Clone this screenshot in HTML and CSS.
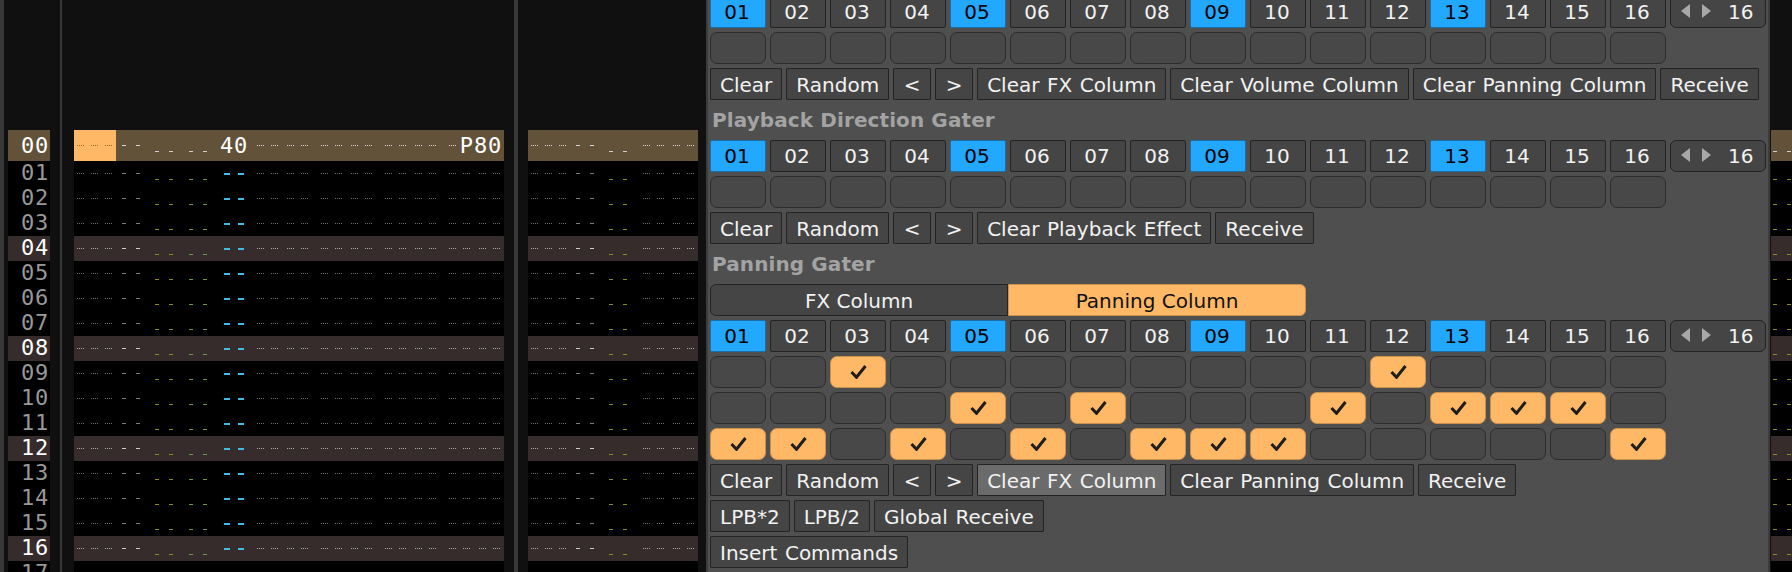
FILE: index.html
```html
<!DOCTYPE html>
<html lang="en">
<head>
<meta charset="utf-8">
<title>Gater</title>
<link rel="stylesheet" href="styles.css">
</head>
<body>
<svg class="defs" width="0" height="0" aria-hidden="true">
  <defs>
    <g id="t1-left">
      <path class="dots" d="M3 12.5h8M17 12.5h8M31 12.5h8"/>
    </g>
    <g id="t1-mid">
      <path class="dash" d="M48 12.5h4M62 12.5h4"/>
      <path class="low1" d="M81 18.5h4M95 18.5h4"/>
      <path class="low2" d="M115 18.5h4M129 18.5h4"/>
      <path class="dots" d="M183 12.5h8M197 12.5h8M213 12.5h8M227 12.5h8M247 12.5h8M261 12.5h8M277 12.5h8M291 12.5h8M311 12.5h8M325 12.5h8M341 12.5h8M355 12.5h8M375 12.5h8"/>
    </g>
    <g id="t1">
      <use href="#t1-left"/>
      <use href="#t1-mid"/>
      <path class="cyan" d="M150 13h6M164 13h6"/>
      <path class="dots" d="M389 12.5h8M405 12.5h8M419 12.5h8"/>
    </g>
    <g id="t2">
      <path class="dots" d="M3 12.5h8M17 12.5h8M31 12.5h8"/>
      <path class="dash" d="M48 12.5h4M62 12.5h4"/>
      <path class="low1" d="M81 18.5h4M95 18.5h4"/>
      <path class="dots" d="M115 12.5h8M129 12.5h8M145 12.5h8M159 12.5h8"/>
    </g>
    <g id="t3">
      <path class="low1" d="M2 18.5h4M16 18.5h4"/>
    </g>
    <g id="tick">
      <path d="M1.5 7l5 5.3L15.5 1"/>
    </g>
    <g id="nav-prev"><path d="M9 0v14L0 7z"/></g>
    <g id="nav-next"><path d="M0 0v14l9-7z"/></g>
  </defs>
</svg>

<main class="app">
  <div class="edge"></div>

  <section class="numbers">
    <div class="num cur">00</div>
    <div class="num">01</div>
    <div class="num">02</div>
    <div class="num">03</div>
    <div class="num beat">04</div>
    <div class="num">05</div>
    <div class="num">06</div>
    <div class="num">07</div>
    <div class="num beat">08</div>
    <div class="num">09</div>
    <div class="num">10</div>
    <div class="num">11</div>
    <div class="num beat">12</div>
    <div class="num">13</div>
    <div class="num">14</div>
    <div class="num">15</div>
    <div class="num beat">16</div>
    <div class="num">17</div>
  </section>

  <div class="sep-thin"></div>

  <section class="track track-1">
    <div class="row cur row-head">
      <div class="cursor"></div>
      <span class="note note-vol">40</span>
      <span class="note note-pan">P80</span>
      <svg class="cells overlay"><g class="on-cursor"><use href="#t1-left" y="3"/></g><use href="#t1-mid" y="3"/></svg>
    </div>
    <div class="row"><svg class="cells"><use href="#t1"/></svg></div>
    <div class="row"><svg class="cells"><use href="#t1"/></svg></div>
    <div class="row"><svg class="cells"><use href="#t1"/></svg></div>
    <div class="row beat"><svg class="cells"><use href="#t1"/></svg></div>
    <div class="row"><svg class="cells"><use href="#t1"/></svg></div>
    <div class="row"><svg class="cells"><use href="#t1"/></svg></div>
    <div class="row"><svg class="cells"><use href="#t1"/></svg></div>
    <div class="row beat"><svg class="cells"><use href="#t1"/></svg></div>
    <div class="row"><svg class="cells"><use href="#t1"/></svg></div>
    <div class="row"><svg class="cells"><use href="#t1"/></svg></div>
    <div class="row"><svg class="cells"><use href="#t1"/></svg></div>
    <div class="row beat"><svg class="cells"><use href="#t1"/></svg></div>
    <div class="row"><svg class="cells"><use href="#t1"/></svg></div>
    <div class="row"><svg class="cells"><use href="#t1"/></svg></div>
    <div class="row"><svg class="cells"><use href="#t1"/></svg></div>
    <div class="row beat"><svg class="cells"><use href="#t1"/></svg></div>
    <div class="row"></div>
  </section>

  <div class="sep-thick"></div>

  <section class="track track-2">
    <div class="row cur row-head"><svg class="cells overlay"><use href="#t2" y="3"/></svg></div>
    <div class="row"><svg class="cells"><use href="#t2"/></svg></div>
    <div class="row"><svg class="cells"><use href="#t2"/></svg></div>
    <div class="row"><svg class="cells"><use href="#t2"/></svg></div>
    <div class="row beat"><svg class="cells"><use href="#t2"/></svg></div>
    <div class="row"><svg class="cells"><use href="#t2"/></svg></div>
    <div class="row"><svg class="cells"><use href="#t2"/></svg></div>
    <div class="row"><svg class="cells"><use href="#t2"/></svg></div>
    <div class="row beat"><svg class="cells"><use href="#t2"/></svg></div>
    <div class="row"><svg class="cells"><use href="#t2"/></svg></div>
    <div class="row"><svg class="cells"><use href="#t2"/></svg></div>
    <div class="row"><svg class="cells"><use href="#t2"/></svg></div>
    <div class="row beat"><svg class="cells"><use href="#t2"/></svg></div>
    <div class="row"><svg class="cells"><use href="#t2"/></svg></div>
    <div class="row"><svg class="cells"><use href="#t2"/></svg></div>
    <div class="row"><svg class="cells"><use href="#t2"/></svg></div>
    <div class="row beat"><svg class="cells"><use href="#t2"/></svg></div>
    <div class="row"></div>
  </section>

  <section class="panel">
    <div class="line">
      <span class="step active">01</span><span class="step">02</span><span class="step">03</span><span class="step">04</span>
      <span class="step active">05</span><span class="step">06</span><span class="step">07</span><span class="step">08</span>
      <span class="step active">09</span><span class="step">10</span><span class="step">11</span><span class="step">12</span>
      <span class="step active">13</span><span class="step">14</span><span class="step">15</span><span class="step">16</span>
      <span class="stepper"><svg class="nav"><use href="#nav-prev"/></svg><svg class="nav"><use href="#nav-next"/></svg><span class="stepper-val">16</span></span>
    </div>
    <div class="line">
      <span class="cb"></span><span class="cb"></span><span class="cb"></span><span class="cb"></span>
      <span class="cb"></span><span class="cb"></span><span class="cb"></span><span class="cb"></span>
      <span class="cb"></span><span class="cb"></span><span class="cb"></span><span class="cb"></span>
      <span class="cb"></span><span class="cb"></span><span class="cb"></span><span class="cb"></span>
    </div>
    <div class="line">
      <button class="btn">Clear</button><button class="btn">Random</button><button class="btn sq">&lt;</button><button class="btn sq">&gt;</button>
      <button class="btn">Clear FX Column</button><button class="btn">Clear Volume Column</button><button class="btn">Clear Panning Column</button><button class="btn">Receive</button>
    </div>

    <h2 class="heading">Playback Direction Gater</h2>
    <div class="line">
      <span class="step active">01</span><span class="step">02</span><span class="step">03</span><span class="step">04</span>
      <span class="step active">05</span><span class="step">06</span><span class="step">07</span><span class="step">08</span>
      <span class="step active">09</span><span class="step">10</span><span class="step">11</span><span class="step">12</span>
      <span class="step active">13</span><span class="step">14</span><span class="step">15</span><span class="step">16</span>
      <span class="stepper"><svg class="nav"><use href="#nav-prev"/></svg><svg class="nav"><use href="#nav-next"/></svg><span class="stepper-val">16</span></span>
    </div>
    <div class="line">
      <span class="cb"></span><span class="cb"></span><span class="cb"></span><span class="cb"></span>
      <span class="cb"></span><span class="cb"></span><span class="cb"></span><span class="cb"></span>
      <span class="cb"></span><span class="cb"></span><span class="cb"></span><span class="cb"></span>
      <span class="cb"></span><span class="cb"></span><span class="cb"></span><span class="cb"></span>
    </div>
    <div class="line">
      <button class="btn">Clear</button><button class="btn">Random</button><button class="btn sq">&lt;</button><button class="btn sq">&gt;</button>
      <button class="btn">Clear Playback Effect</button><button class="btn">Receive</button>
    </div>

    <h2 class="heading">Panning Gater</h2>
    <div class="seg">
      <button class="seg-btn">FX Column</button><button class="seg-btn selected">Panning Column</button>
    </div>
    <div class="line">
      <span class="step active">01</span><span class="step">02</span><span class="step">03</span><span class="step">04</span>
      <span class="step active">05</span><span class="step">06</span><span class="step">07</span><span class="step">08</span>
      <span class="step active">09</span><span class="step">10</span><span class="step">11</span><span class="step">12</span>
      <span class="step active">13</span><span class="step">14</span><span class="step">15</span><span class="step">16</span>
      <span class="stepper"><svg class="nav"><use href="#nav-prev"/></svg><svg class="nav"><use href="#nav-next"/></svg><span class="stepper-val">16</span></span>
    </div>
    <div class="line">
      <span class="cb"></span><span class="cb"></span><span class="cb on"><svg class="tick"><use href="#tick"/></svg></span><span class="cb"></span>
      <span class="cb"></span><span class="cb"></span><span class="cb"></span><span class="cb"></span>
      <span class="cb"></span><span class="cb"></span><span class="cb"></span><span class="cb on"><svg class="tick"><use href="#tick"/></svg></span>
      <span class="cb"></span><span class="cb"></span><span class="cb"></span><span class="cb"></span>
    </div>
    <div class="line">
      <span class="cb"></span><span class="cb"></span><span class="cb"></span><span class="cb"></span>
      <span class="cb on"><svg class="tick"><use href="#tick"/></svg></span><span class="cb"></span><span class="cb on"><svg class="tick"><use href="#tick"/></svg></span><span class="cb"></span>
      <span class="cb"></span><span class="cb"></span><span class="cb on"><svg class="tick"><use href="#tick"/></svg></span><span class="cb"></span>
      <span class="cb on"><svg class="tick"><use href="#tick"/></svg></span><span class="cb on"><svg class="tick"><use href="#tick"/></svg></span><span class="cb on"><svg class="tick"><use href="#tick"/></svg></span><span class="cb"></span>
    </div>
    <div class="line">
      <span class="cb on"><svg class="tick"><use href="#tick"/></svg></span><span class="cb on"><svg class="tick"><use href="#tick"/></svg></span><span class="cb"></span><span class="cb on"><svg class="tick"><use href="#tick"/></svg></span>
      <span class="cb"></span><span class="cb on"><svg class="tick"><use href="#tick"/></svg></span><span class="cb"></span><span class="cb on"><svg class="tick"><use href="#tick"/></svg></span>
      <span class="cb on"><svg class="tick"><use href="#tick"/></svg></span><span class="cb on"><svg class="tick"><use href="#tick"/></svg></span><span class="cb"></span><span class="cb"></span>
      <span class="cb"></span><span class="cb"></span><span class="cb"></span><span class="cb on"><svg class="tick"><use href="#tick"/></svg></span>
    </div>
    <div class="line">
      <button class="btn">Clear</button><button class="btn">Random</button><button class="btn sq">&lt;</button><button class="btn sq">&gt;</button>
      <button class="btn hover">Clear FX Column</button><button class="btn">Clear Panning Column</button><button class="btn">Receive</button>
    </div>
    <div class="line">
      <button class="btn">LPB*2</button><button class="btn">LPB/2</button><button class="btn">Global Receive</button>
    </div>
    <div class="line">
      <button class="btn">Insert Commands</button>
    </div>
  </section>

  <section class="track track-3">
    <div class="row cur row-head"><svg class="cells overlay"><use href="#t3" y="3"/></svg></div>
    <div class="row"><svg class="cells"><use href="#t3"/></svg></div>
    <div class="row"><svg class="cells"><use href="#t3"/></svg></div>
    <div class="row"><svg class="cells"><use href="#t3"/></svg></div>
    <div class="row beat"><svg class="cells"><use href="#t3"/></svg></div>
    <div class="row"><svg class="cells"><use href="#t3"/></svg></div>
    <div class="row"><svg class="cells"><use href="#t3"/></svg></div>
    <div class="row"><svg class="cells"><use href="#t3"/></svg></div>
    <div class="row beat"><svg class="cells"><use href="#t3"/></svg></div>
    <div class="row"><svg class="cells"><use href="#t3"/></svg></div>
    <div class="row"><svg class="cells"><use href="#t3"/></svg></div>
    <div class="row"><svg class="cells"><use href="#t3"/></svg></div>
    <div class="row beat"><svg class="cells"><use href="#t3"/></svg></div>
    <div class="row"><svg class="cells"><use href="#t3"/></svg></div>
    <div class="row"><svg class="cells"><use href="#t3"/></svg></div>
    <div class="row"><svg class="cells"><use href="#t3"/></svg></div>
    <div class="row beat"><svg class="cells"><use href="#t3"/></svg></div>
    <div class="row"></div>
  </section>
</main>
</body>
</html>
```
FILE: styles.css
```css
* { box-sizing: border-box; }

html, body {
  margin: 0;
  height: 572px;
  overflow: hidden;
  background: #101010;
}

.defs { position: absolute; }

.app {
  display: flex;
  width: 1792px;
  height: 572px;
  overflow: hidden;
  background: #101010;
}

.edge { flex: none; width: 4px; background: #383838; }

/* line numbers */
.numbers {
  flex: none;
  width: 42px;
  margin: 130px 10px 0 4px;
  background: #000;
  font: 22px/24px "DejaVu Sans Mono", monospace;
  letter-spacing: 0.8px;
  color: #989898;
}
.num { height: 25px; padding-left: 13px; white-space: nowrap; }
.num.beat { background: #352c2b; color: #fff; }
.num.cur { height: 31px; line-height: 31px; background: #62523a; color: #fff; }

.sep-thin { flex: none; width: 2px; margin-right: 12px; background: #383838; }
.sep-thick { flex: none; width: 4px; margin: 0 10px; background: #383838; }

/* pattern tracks */
.track {
  flex: none;
  margin-top: 130px;
  background: #000;
  --dot: #6f6f6f;
  --dash: #7c7c7c;
  --low1: #8f8a1e;
  --low2: #6d9650;
  --cyan: #3fbce8;
}
.track-1 { width: 430px; }
.track-2 { width: 170px; margin-right: 8px; }
.track-3 { width: 21px; margin-left: 1px; }

.row { position: relative; height: 25px; }
.row.beat {
  background: #352c2b;
  --dot: #a8a8a8;
  --dash: #cfcfcf;
}
.row.cur {
  background: #62523a;
  --dot: #d8d8d8;
  --dash: #d8d8d8;
  --low1: #cfcfcf;
  --low2: #cfcfcf;
}
.row-head {
  display: flex;
  height: 31px;
  font: 22px/31px "DejaVu Sans Mono", monospace;
  letter-spacing: 0.8px;
  color: #fff;
}

.cursor { flex: none; width: 42px; height: 31px; background: #ffb866; }
.note-vol { margin-left: 104px; }
.note-pan { margin-left: auto; padding-right: 2px; }

.cells { display: block; width: 100%; height: 25px; }
.cells.overlay { position: absolute; inset: 0; height: 31px; }
.on-cursor { --dot: #a5651f; }

.dots { fill: none; stroke: var(--dot); stroke-dasharray: 1 1; }
.dash { fill: none; stroke: var(--dash); }
.low1 { fill: none; stroke: var(--low1); }
.low2 { fill: none; stroke: var(--low2); }
.cyan { fill: none; stroke: var(--cyan); stroke-width: 2; }

/* gater panel */
.panel {
  flex: none;
  display: flex;
  flex-direction: column;
  justify-content: flex-end;
  gap: 4px;
  width: 1064px;
  height: 572px;
  padding: 0 2px 4px;
  background: #4f4f4f;
  border-left: 2px solid #3c3c3c;
  border-right: 2px solid #3c3c3c;
  font: 20px "DejaVu Sans", sans-serif;
  color: #f2f2f2;
}

.line { flex: none; display: flex; gap: 4px; height: 32px; }

.heading {
  flex: none;
  height: 32px;
  margin: 0;
  padding-left: 2px;
  font: bold 20px/32px "DejaVu Sans", sans-serif;
  letter-spacing: 0.1px;
  color: #a3a3a3;
}

.step {
  flex: none;
  width: 56px;
  height: 32px;
  padding-right: 2px;
  background: #454545;
  border: 1px solid #232323;
  border-radius: 2px;
  line-height: 31px;
  text-align: center;
}
.step.active { background: #22a8ff; border-color: #1c6fa8; color: #000; }

.stepper {
  flex: none;
  display: flex;
  align-items: flex-start;
  width: 96px;
  height: 32px;
  padding: 7px 0 0 10px;
  background: #454545;
  border: 1px solid #232323;
  border-radius: 6px;
  line-height: 31px;
}
.nav { flex: none; width: 9px; height: 14px; margin-right: 12px; fill: #a8a8a8; }
.stepper-val { margin: -7px 0 0 5px; }

.cb {
  flex: none;
  display: flex;
  align-items: center;
  justify-content: center;
  width: 56px;
  height: 32px;
  background: #484848;
  border: 1px solid #2c2c2c;
  border-radius: 7px;
}
.cb.on { background: #ffb866; border-color: #c9904f; }
.tick { width: 17px; height: 14px; fill: none; stroke: #1e1e1e; stroke-width: 3; }

.btn {
  flex: none;
  height: 32px;
  margin: 0;
  padding: 2px 9px 0;
  background: #454545;
  border: 1px solid #232323;
  border-radius: 1px;
  font: 20px/28px "DejaVu Sans", sans-serif;
  word-spacing: 1.2px;
  color: #f2f2f2;
}
.btn.sq { width: 38px; padding: 2px 0 0; }
.btn.hover { background: #6b6b6b; }

.seg { flex: none; display: flex; width: 596px; height: 32px; }
.seg-btn {
  flex: 1;
  margin: 0;
  padding: 2px 0 0;
  background: #454545;
  border: 1px solid #232323;
  border-radius: 6px 0 0 6px;
  font: 20px/28px "DejaVu Sans", sans-serif;
  color: #f2f2f2;
}
.seg-btn.selected {
  background: #ffb866;
  border-color: #c9904f;
  border-radius: 0 6px 6px 0;
  color: #111;
}
```
